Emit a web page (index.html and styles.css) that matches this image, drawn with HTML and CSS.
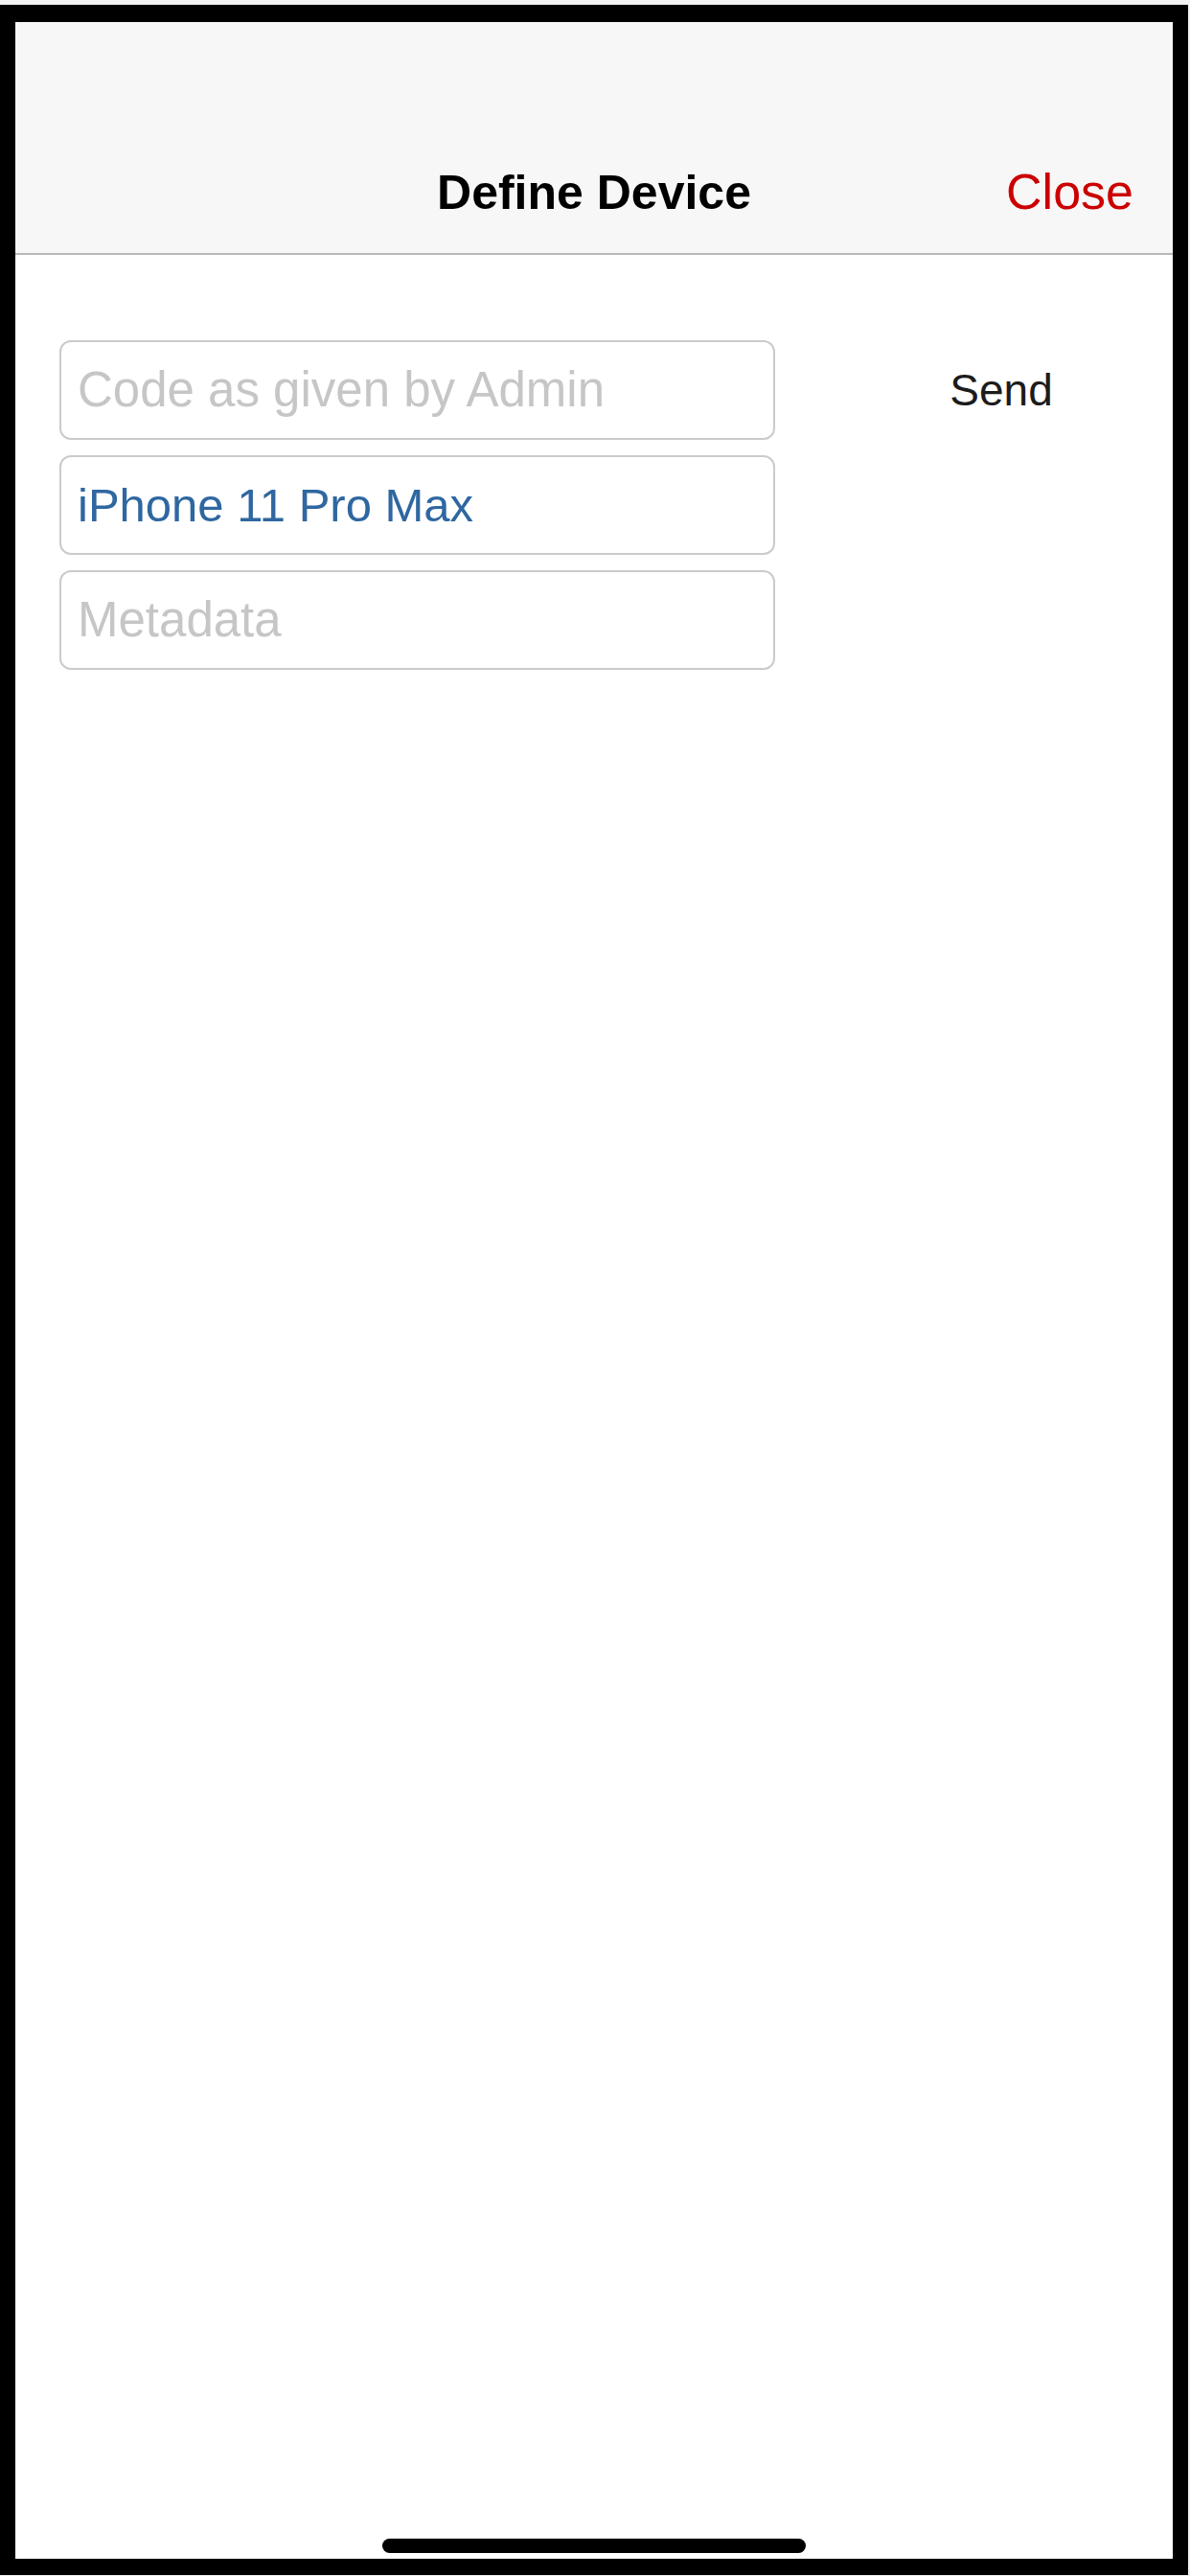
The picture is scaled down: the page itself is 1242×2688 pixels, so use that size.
FILE: index.html
```html
<!DOCTYPE html>
<html lang="en">
<head>
<meta charset="utf-8">
<title>Define Device</title>
<link rel="stylesheet" href="styles.css">
</head>
<body>
<div class="frame">
  <div class="app">
    <header class="navbar">
      <span class="nav-spacer"></span>
      <h1 class="nav-title">Define Device</h1>
      <span class="nav-action"><button class="close-btn" type="button">Close</button></span>
    </header>
    <main class="content">
      <div class="form-row">
        <div class="fields">
          <input class="field" type="text" placeholder="Code as given by Admin">
          <input class="field field-filled" type="text" value="iPhone 11 Pro Max">
          <input class="field" type="text" placeholder="Metadata">
        </div>
        <button class="send-btn" type="button">Send</button>
      </div>
    </main>
    <div class="home-indicator"></div>
  </div>
</div>
</body>
</html>
```
FILE: styles.css
```css
html, body {
  margin: 0;
  padding: 0;
}
body {
  background: #f2f2f2;
  width: 1242px;
  height: 2688px;
  overflow: hidden;
  font-family: "Liberation Sans", Arial, sans-serif;
}
.frame {
  margin-top: 5px;
  width: 1240px;
  height: 2682px;
  box-sizing: border-box;
  background: #000;
  padding: 18px 16px 17px 16px;
}
.app {
  position: relative;
  width: 1208px;
  height: 2647px;
  background: #fff;
  display: flex;
  flex-direction: column;
}
.navbar {
  background: #f7f7f7;
  border-bottom: 2px solid #b9b9b9;
  padding: 147px 0 33px 0;
  display: grid;
  grid-template-columns: 1fr auto 1fr;
  align-items: baseline;
}
.nav-title {
  margin: 0;
  font-size: 50px;
  line-height: 60px;
  font-weight: bold;
  color: #000;
  text-align: center;
}
.nav-action {
  display: flex;
  justify-content: flex-end;
  padding-right: 41px;
}
.close-btn {
  border: 0;
  background: none;
  padding: 0;
  font-family: "Liberation Sans", Arial, sans-serif;
  font-size: 52px;
  line-height: 60px;
  color: #cc0000;
}
.content {
  padding: 89px 0 0 46px;
}
.form-row {
  display: flex;
  align-items: flex-start;
}
.fields {
  width: 747px;
  display: flex;
  flex-direction: column;
  gap: 16px;
}
.field {
  display: block;
  width: 100%;
  height: 104px;
  box-sizing: border-box;
  border: 2px solid #cbcbcb;
  border-radius: 12px;
  padding: 0 17px;
  margin: 0;
  background: #fff;
  font-family: "Liberation Sans", Arial, sans-serif;
  font-size: 49px;
  color: #2f67a0;
  outline: none;
}
.field::placeholder {
  color: #c6c6c6;
  font-size: 51px;
  opacity: 1;
}
.send-btn {
  margin-left: auto;
  margin-right: 24px;
  width: 310px;
  height: 104px;
  border: 0;
  background: none;
  padding: 0;
  font-family: "Liberation Sans", Arial, sans-serif;
  font-size: 46px;
  color: #1c1c1c;
  text-align: center;
}
.home-indicator {
  position: absolute;
  left: 383px;
  bottom: 6px;
  width: 442px;
  height: 15px;
  border-radius: 8px;
  background: #000;
}
```
